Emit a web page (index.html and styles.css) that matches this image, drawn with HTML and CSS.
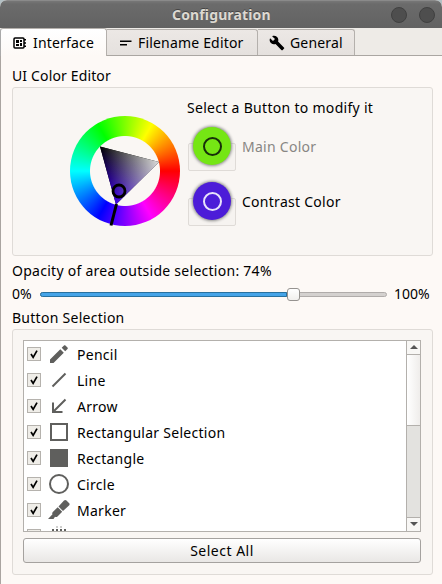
FILE: index.html
```html
<!DOCTYPE html>
<html lang="en">
<head>
<meta charset="utf-8">
<title>Configuration</title>
<link rel="stylesheet" href="styles.css">
</head>
<body>
<div class="window">
  <header class="titlebar"><h1>Configuration</h1><div class="controls"><i></i><i></i></div></header>
  <nav class="tabs">
    <div class="tab active">
      <svg width="14" height="12" viewBox="0 0 14 12"><rect x="1" y="1" width="10" height="10" rx="1" fill="none" stroke="#000" stroke-width="1.5"/><path d="M3 3h3v3H3zM7 3h2v2H7zM7 6h2v3H7zM3 7h3v2H3zM11 2h2v1.500h-2zM11 5.200h2v1.500h-2zM11 8.500h2V10h-2z"/></svg>
      <span>Interface</span>
    </div>
    <div class="tab names">
      <svg width="12" height="12" viewBox="0 0 12 12"><path d="M0 3.500h11.500V5H0zM0 7h7v1.500H0z"/></svg>
      <span>Filename Editor</span>
    </div>
    <div class="tab general">
      <svg width="16" height="16" viewBox="0 0 24 24"><path d="M22.700 19l-9.100-9.100c.9-2.300.4-5-1.500-6.900-2-2-5-2.400-7.400-1.300L9 6 6 9 1.600 4.700C.4 7.100.9 10.100 2.900 12.100c1.900 1.900 4.600 2.400 6.900 1.500l9.100 9.100c.4.4 1 .4 1.400 0l2.300-2.300c.5-.4.5-1.100.1-1.400z"/></svg>
      <span>General</span>
    </div>
  </nav>
  <main class="page">
    <h2 class="heading">UI Color Editor</h2>
    <section class="group colors">
      <div class="wheel">
        <svg width="110" height="110" viewBox="0 0 110 110">
          <defs>
            <linearGradient id="white" gradientUnits="userSpaceOnUse" x1="38" y1="59.400" x2="89" y2="46"><stop stop-color="#000"/><stop offset="1" stop-color="#dcdcdc"/></linearGradient>
            <linearGradient id="hue" gradientUnits="userSpaceOnUse" x1="59.500" y1="38" x2="46" y2="88"><stop stop-color="#000"/><stop offset="1" stop-color="#4000f0"/></linearGradient>
          </defs>
          <path d="M30 30.500L89 46L46 88.500Z" fill="url(#white)"/>
          <path class="blend" d="M30 30.500L89 46L46 88.500Z" fill="url(#hue)"/>
          <path d="M46.500 88L41 109.500" stroke="#000" stroke-width="3"/>
          <circle cx="49" cy="75" r="6" fill="none" stroke="#000" stroke-width="2.800"/>
        </svg>
      </div>
      <div class="choices">
        <p>Select a Button to modify it</p>
        <div class="choice main"><div class="well"><b></b></div><span>Main Color</span></div>
        <div class="choice contrast"><div class="well"><b></b></div><span>Contrast Color</span></div>
      </div>
    </section>
    <p class="opacity">Opacity of area outside selection: 74%</p>
    <div class="slider"><span>0%</span><div class="track"><div class="fill"></div><div class="thumb"></div></div><span>100%</span></div>
    <h2 class="selection">Button Selection</h2>
    <section class="group buttons">
      <div class="list">
        <ul>
          <li><svg class="check" viewBox="0 0 14 14"><path d="M3 6l2.500 4 4.500-8"/></svg><svg class="icon" viewBox="0 0 24 24"><path d="M3 17.500V21h3.500L16.800 10.700l-3.500-3.500zM20.500 7c.5-.5.5-1 0-1.400l-2.100-2.100c-.4-.4-1-.4-1.400 0l-2.300 2.300 3.500 3.500z"/></svg><span>Pencil</span></li>
          <li><svg class="check" viewBox="0 0 14 14"><path d="M3 6l2.500 4 4.500-8"/></svg><svg class="icon line" viewBox="0 0 24 24"><path d="M5.500 18.500l13-13"/></svg><span>Line</span></li>
          <li><svg class="check" viewBox="0 0 14 14"><path d="M3 6l2.500 4 4.500-8"/></svg><svg class="icon line" viewBox="0 0 24 24"><path d="M18.500 5.500l-12.500 12.500M6 8.500V18h9.500"/></svg><span>Arrow</span></li>
          <li><svg class="check" viewBox="0 0 14 14"><path d="M3 6l2.500 4 4.500-8"/></svg><svg class="icon line" viewBox="0 0 24 24"><path d="M4 4h16v16H4z"/></svg><span>Rectangular Selection</span></li>
          <li><svg class="check" viewBox="0 0 14 14"><path d="M3 6l2.500 4 4.500-8"/></svg><svg class="icon" viewBox="0 0 24 24"><path d="M3 3h18v18H3z"/></svg><span>Rectangle</span></li>
          <li><svg class="check" viewBox="0 0 14 14"><path d="M3 6l2.500 4 4.500-8"/></svg><svg class="icon line" viewBox="0 0 24 24"><circle cx="12" cy="12" r="9"/></svg><span>Circle</span></li>
          <li><svg class="check" viewBox="0 0 14 14"><path d="M3 6l2.500 4 4.500-8"/></svg><svg class="icon" viewBox="0 0 24 24"><path d="M11.500 8.500l5.500-6c.8-.8 1.700-.8 2.500 0l2.500 2.500c.8.8.8 1.700 0 2.500l-6 5.500zM10.700 9.200l4.500 4.500-4.700 4.700c-.8.8-1.700.9-2.500.3L6.500 21H1l4.500-4.700c-.5-.8-.4-1.600.3-2.300z"/></svg><span>Marker</span></li>
          <li><svg class="check" viewBox="0 0 14 14"><path d="M3 6l2.500 4 4.500-8"/></svg><svg class="icon" viewBox="0 0 24 24"><path d="M5 5h2v16H5zM9 5h2v16H9zM13 5h2v16h-2zM17 5h2v16h-2z"/><path opacity=".3" d="M9 2h2v2H9zM13 2h2v2h-2z"/></svg><span>Pixelate</span></li>
        </ul>
        <div class="scrollbar"><div class="cap"><svg width="8" height="5"><path d="M4 0l4 4H0z"/></svg></div><div class="handle"></div><div class="trough"></div><div class="cap down"><svg width="8" height="5"><path d="M0 0h8L4 4z"/></svg></div></div>
      </div>
      <button>Select All</button>
    </section>
  </main>
</div>
</body>
</html>
```

FILE: styles.css
```css
*, *::after { box-sizing: border-box; }
body { margin: 0; background: #b3c0c4; color: #000; font: 14px/18px "Noto Sans", "Open Sans", sans-serif; letter-spacing: .27px; overflow: hidden; }
h1, h2, p, ul { margin: 0; padding: 0; font: inherit; }
svg { display: block; flex: none; }
span { white-space: nowrap; }
.window { height: 584px; display: flex; flex-direction: column; background: #fdf9f6; border-radius: 7px 7px 0 0; overflow: hidden; }
.titlebar { height: 28px; flex: none; display: flex; align-items: center; background: linear-gradient(#777 0, #6b6b6b 3px, #626262); border-top: 1px solid #8a8a8a; padding-left: 172px; }
.titlebar h1 { font-weight: 700; color: #ddd9d1; width: 98px; text-shadow: 0 -1px #444; white-space: nowrap; padding-top: 1px; letter-spacing: .14px; }
.controls { display: flex; gap: 12px; margin-left: 121px; }
.controls i { width: 16px; height: 16px; border-radius: 50%; background: #4e4e4e; border: 1px solid #404040; flex: none; }
.tabs { height: 28px; flex: none; display: flex; align-items: flex-end; background: #eeebe7; border-bottom: 1px solid #aaa6a2; letter-spacing: .18px; }
.tab { height: 26px; display: flex; align-items: center; background: linear-gradient(#ece8e5, #e5e1de); border: 1px solid #b4b0ac; border-left: 0; border-bottom: 0; border-radius: 0 3px 0 0; flex: none; }
.tab span { padding-top: 1px; }
.tab.active { width: 107px; height: 28px; margin-bottom: -1px; background: linear-gradient(#fff, #fdf9f6); border-left: 1px solid #aaa; border-radius: 3px 3px 0 0; padding-left: 12px; gap: 6px; }
.tab.names { width: 151px; padding-left: 13px; gap: 6px; }
.tab.general { width: 97px; padding-left: 11px; gap: 5px; }
.page { flex: 1; border-left: 1px solid #aaa5a1; padding: 11px 9px 0 11px; }
.heading { letter-spacing: .14px; }
.group { border: 1px solid #dfdbd7; border-radius: 3px; background: #f9f6f3; }
.colors { height: 169px; margin-top: 2px; display: flex; }
.wheel { width: 110px; height: 110px; margin: 28px 0 0 57px; border-radius: 50%; background: radial-gradient(circle, #faf7f4 34.500px, transparent 35.500px), conic-gradient(from 90deg, #f00, #f0f, #00f, #0ff, #0f0, #ff0, #f00); }
.wheel svg { isolation: isolate; }
.blend { mix-blend-mode: screen; }
.choices { margin: 11px 0 0 7px; }
.choices p { letter-spacing: .3px; }
.choice { height: 55px; display: flex; align-items: center; gap: 6px; margin-left: 1px; }
.choice span { padding-top: 1px; }
.choice .well { width: 48px; height: 28px; border: 1px solid #dfdbd7; border-radius: 2px; background: #f6f3f0; margin-top: 21px; display: flex; justify-content: center; }
.choice.main { color: #888683; margin-top: 2px; }
.choice b { width: 38px; height: 38px; flex: none; border-radius: 50%; margin-top: -17px; display: grid; place-items: center; background: #75e614; box-shadow: 0 0 3px 1px #8c8c8c; color: #17300a; }
.choice b::after { content: ""; width: 19px; height: 19px; border: 2px solid; border-radius: 50%; }
.choice.contrast b { background: #4c1cd8; color: #e8e2fb; }
.opacity { margin-top: 6px; }
.slider { display: flex; align-items: center; margin-top: 5px; height: 18px; letter-spacing: 0; }
.slider > span:first-child { width: 28px; }
.track { width: 347px; height: 5px; border: 1px solid #b0acaa; border-radius: 3px; background: #d4d1cf; display: flex; align-items: center; margin-right: 7px; flex: none; }
.fill { width: 247px; height: 5px; flex: none; margin-left: -1px; border: 1px solid #28719f; background: #45a4e8; border-radius: 3px 0 0 3px; }
.thumb { width: 13px; height: 13px; flex: none; border: 1px solid #969390; border-radius: 3px; background: linear-gradient(#fff, #f1efed); }
.selection { margin-top: 6px; }
.buttons { height: 246px; margin-top: 2px; padding: 10px 11px 0 10px; }
.list { height: 192px; display: flex; background: #fff; border: 1px solid #b3b0ac; overflow: hidden; }
.list ul { flex: 1; list-style: none; }
.list li { height: 26px; display: flex; align-items: center; padding-left: 3px; }
.list span { padding-top: 2px; }
.check { width: 14px; height: 14px; border: 1px solid #b5b2ad; background: #efede8; margin-right: 6px; overflow: visible; }
.check path { fill: none; stroke: #000; stroke-width: 2; transform: translate(.5px, 1px); }
.icon { width: 24px; height: 24px; margin-right: 6px; fill: #5f5f5d; }
.icon.line { fill: none; stroke: #5f5f5d; stroke-width: 2; }
.scrollbar { width: 14px; display: flex; flex-direction: column; border-left: 1px solid #b3b0ac; flex: none; }
.cap { height: 14px; display: grid; place-items: center; background: #f8f7f5; border-bottom: 1px solid #b3b0ac; }
.cap svg { fill: #555; }
.cap.down { border: 0; border-top: 1px solid #b3b0ac; }
.handle { height: 71px; background: linear-gradient(90deg, #fff, #efedeb); border-bottom: 1px solid #b3b0ac; }
.trough { flex: 1; background: #e3e2df; }
button { display: block; width: 100%; height: 25px; margin-top: 6px; padding: 0; border: 1px solid #a5a29f; border-radius: 3px; background: linear-gradient(#fff, #e9e7e5); color: #000; font: inherit; letter-spacing: .5px; }
```
